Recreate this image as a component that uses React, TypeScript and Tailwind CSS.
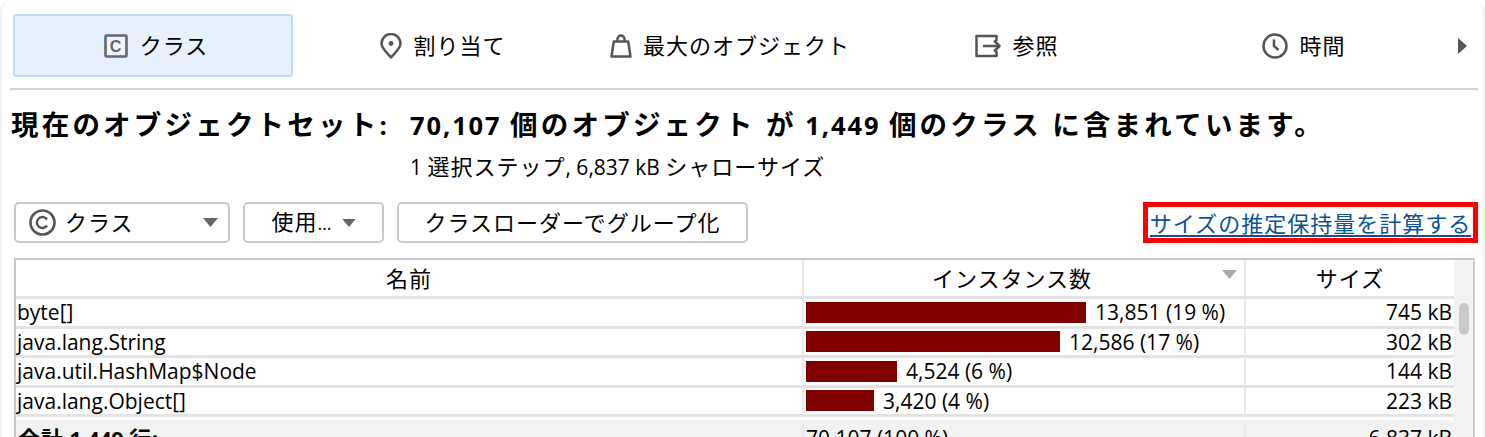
import React from "react";

const FONT = "font-['Open_Sans','Noto_Sans_CJK_JP',sans-serif]";
const CJK = "text-[22px] tracking-[1px]";

function ClassIcon() {
  return (
    <svg width="24" height="24" viewBox="0 0 24 24" fill="none">
      <rect x="1.5" y="1.5" width="21" height="21" rx="1.5" stroke="#5f6873" strokeWidth="2.6" fill="#f0f4f8" />
      <text x="12" y="17.5" textAnchor="middle" fontSize="16" fontWeight="700" fontFamily="Liberation Sans" fill="#5f6873">C</text>
    </svg>
  );
}
function PinIcon() {
  return (
    <svg width="22" height="26" viewBox="0 0 22 26" fill="none" stroke="#555" strokeWidth="2.5">
      <path d="M11 24.5 C7 19.5 1.5 15.5 1.5 10.5 A9.5 9.5 0 0 1 20.5 10.5 C20.5 15.5 15 19.5 11 24.5 Z" strokeLinejoin="round" />
      <circle cx="11" cy="10.5" r="2.4" fill="#555" stroke="none" />
    </svg>
  );
}
function BagIcon() {
  return (
    <svg width="22" height="24" viewBox="0 0 22 24" fill="none" stroke="#555" strokeWidth="2.5" strokeLinejoin="round">
      <path d="M3.8 7.5 H18.2 L20.5 22.5 H1.5 Z" />
      <path d="M7.5 7.5 V5 A3.5 3.5 0 0 1 14.5 5 V7.5" />
    </svg>
  );
}
function RefIcon() {
  return (
    <svg width="26" height="24" viewBox="0 0 26 24" fill="none" stroke="#555" strokeWidth="2.5" strokeLinejoin="round">
      <path d="M21.5 7 V2 H1.5 V22 H21.5 V17" />
      <path d="M8 12 H24.5 M19 6.5 L24.5 12 L19 17.5" />
    </svg>
  );
}
function ClockIcon() {
  return (
    <svg width="26" height="26" viewBox="0 0 26 26" fill="none" stroke="#555" strokeWidth="2.5">
      <circle cx="13" cy="13" r="11.5" />
      <path d="M12 6.5 V13 L16.5 17" />
    </svg>
  );
}
function CopyIcon() {
  return (
    <svg width="27" height="27" viewBox="0 0 27 27" fill="none" stroke="#555" strokeWidth="2.6">
      <circle cx="13.5" cy="13.5" r="12" />
      <path d="M18 10.5 A5.5 5.5 0 1 0 18 16.5" strokeWidth="2.4" />
    </svg>
  );
}
function Caret({ color = "#666", w = 15, h = 9 }: { color?: string; w?: number; h?: number }) {
  return (
    <svg width={w} height={h} viewBox="0 0 15 9">
      <path d="M0 0 H15 L7.5 9 Z" fill={color} />
    </svg>
  );
}

const tabs = [
  { label: "割り当て", icon: <PinIcon /> },
  { label: "最大のオブジェクト", icon: <BagIcon /> },
  { label: "参照", icon: <RefIcon /> },
  { label: "時間", icon: <ClockIcon /> },
];

const rows = [
  { name: "byte[]", bar: 280, n: "13,851 (19 %)", size: "745 kB" },
  { name: "java.lang.String", bar: 254, n: "12,586 (17 %)", size: "302 kB" },
  { name: "java.util.HashMap$Node", bar: 91, n: "4,524 (6 %)", size: "144 kB" },
  { name: "java.lang.Object[]", bar: 68, n: "3,420 (4 %)", size: "223 kB" },
];

const HJ = ({ children }: { children: React.ReactNode }) => (
  <span className="text-[27.5px] tracking-[3.2px]">{children}</span>
);

export default function App() {
  return (
    <div className={`${FONT} h-[437px] w-[1485px] overflow-hidden bg-white text-[21px] leading-[28px] text-black`}>
      <div className="h-full rounded-tl-xl rounded-tr-xl border-x-2 border-[#f3f3f3] pl-[8px] pr-[5px]">
        {/* Tabs */}
        <div className="flex h-[90px] items-start border-b-2 border-[#d4d4d4] pl-[3px] pt-[14px]">
          <div className={`flex h-[63px] w-[280px] items-center justify-center gap-[12px] rounded-[3px] border-2 border-[#bfdcfb] bg-[#e6f1fd] pl-[6px] ${CJK}`}>
            <ClassIcon />
            <span className="mb-[2px]">クラス</span>
          </div>
          {tabs.map((t) => (
            <div key={t.label} className={`ml-[7px] flex h-[63px] w-[280px] items-center justify-center gap-[11px] pl-[6px] ${CJK}`}>
              {t.icon}
              <span className="mb-[2px]">{t.label}</span>
            </div>
          ))}
          <div className="ml-[17px] flex h-[63px] items-center">
            <div className="h-0 w-0 border-y-[8px] border-l-[9px] border-y-transparent border-l-[#555]" />
          </div>
        </div>

        {/* Summary */}
        <div className="mt-[18px] flex h-[34px] items-center text-[25.5px] font-bold leading-[34px] tracking-[1.9px]">
          <div className="w-[400px] shrink-0 whitespace-nowrap pl-[1px]"><HJ>現在のオブジェクトセット</HJ>:</div>
          <div className="whitespace-nowrap">
            70,107 <HJ>個のオブジェクト が</HJ> 1,449 <HJ>個のクラス に含まれています。</HJ>
          </div>
        </div>
        <div className="mt-[10px] h-[28px] pl-[400px] leading-[28px]">
          1 <span className={CJK}>選択ステップ</span>, 6,837 kB <span className={CJK}>シャローサイズ</span>
        </div>

        {/* Toolbar */}
        <div className="mt-[22px] flex items-start pl-[4px]">
          <div className={`flex h-[41px] w-[216px] items-center rounded-[5px] border-2 border-[#c9c9c9] pl-[13px] pr-[10px] ${CJK}`}>
            <CopyIcon />
            <span className="mb-[2px] ml-[9px]">クラス</span>
            <span className="ml-auto"><Caret /></span>
          </div>
          <div className={`ml-[13px] flex h-[41px] w-[141px] items-center justify-center gap-[10px] rounded-[5px] border-2 border-[#c9c9c9] ${CJK}`}>
            <span className="mb-[2px]">使用<span className="text-[18px] tracking-[0px]">...</span></span>
            <Caret w={14} h={8} />
          </div>
          <div className={`ml-[13px] flex h-[41px] w-[351px] items-center justify-center rounded-[5px] border-2 border-[#c9c9c9] ${CJK}`}>
            <span className="mb-[2px]">クラスローダーでグループ化</span>
          </div>
          <div className="ml-auto flex h-[41px] w-[335px] items-center justify-center border-[5px] border-[#ff0000]">
            <span className={`whitespace-nowrap text-[#0b5394] underline decoration-2 underline-offset-[3px] ${CJK}`}>サイズの推定保持量を計算する</span>
          </div>
        </div>

        {/* Table */}
        <div className="ml-[4px] mr-[3px] mt-[15px] border-2 border-b-0 border-[#c9c9c9]">
          <div className="flex">
            <div className="min-w-0 flex-1">
              <div className="grid h-[39px] grid-cols-[786px_444px_1fr] border-b-[3px] border-[#e3e3e3]">
                <div className={`flex items-center justify-center ${CJK}`}>名前</div>
                <div className={`relative flex items-center justify-center border-x-2 border-[#e9e9e9] pr-[24px] ${CJK}`}>
                  インスタンス数
                  <span className="absolute right-[7px] top-[10px] flex"><Caret color="#aaa" /></span>
                </div>
                <div className={`flex items-center justify-center ${CJK}`}>サイズ</div>
              </div>
              {rows.map((r) => (
                <div key={r.name} className="grid h-[29.5px] grid-cols-[786px_444px_1fr] border-b-[3px] border-[#e3e3e3] leading-[26px]">
                  <div className="pl-[1px]">{r.name}</div>
                  <div className="flex items-center border-x-2 border-[#e9e9e9] pl-[2px]">
                    <div className="h-[21px] bg-[#800000]" style={{ width: r.bar }} />
                    <span className="ml-[9px]">{r.n}</span>
                  </div>
                  <div className="pr-[2px] text-right">{r.size}</div>
                </div>
              ))}
              <div className="mt-[3px] grid h-[40px] grid-cols-[786px_444px_1fr] bg-[#f2f2f2] pt-[4px]">
                <div className="pl-[2px] font-bold">
                  <span className={CJK}>合計</span> 1,449 <span className={CJK}>行</span>:
                </div>
                <div className="border-x-2 border-[#e9e9e9] pl-[2px]">70,107 (100 %)</div>
                <div className="pr-[2px] text-right">6,837 kB</div>
              </div>
            </div>
            <div className="h-[190px] w-[19px] shrink-0 bg-[#f2f2f2] pl-[5px] pt-[43px]">
              <div className="h-[32px] w-[10px] rounded-full bg-[#c9c9c9]" />
            </div>
          </div>
        </div>
      </div>
    </div>
  );
}
